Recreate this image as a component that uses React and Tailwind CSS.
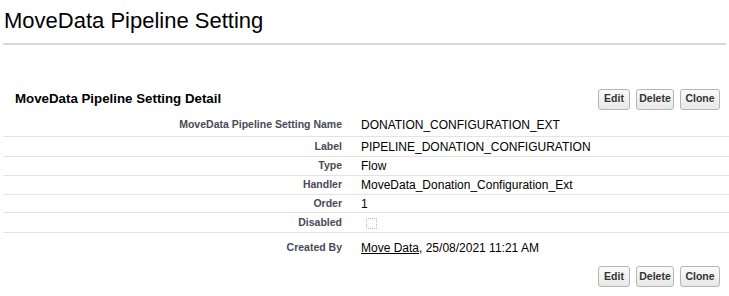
const rows = [
  { label: 'MoveData Pipeline Setting Name', value: 'DONATION_CONFIGURATION_EXT', h: 'h-[27px] pt-[3px]' },
  { label: 'Label', value: 'PIPELINE_DONATION_CONFIGURATION', h: 'h-[20px]' },
  { label: 'Type', value: 'Flow', h: 'h-[19px]' },
  { label: 'Handler', value: 'MoveData_Donation_Configuration_Ext', h: 'h-[19px]' },
  { label: 'Order', value: '1', h: 'h-[18px]' },
  { label: 'Disabled', checkbox: true, h: 'h-[20px]' },
];

const buttons = [
  { name: 'Edit', w: 'w-[32px]' },
  { name: 'Delete', w: 'w-[38px]' },
  { name: 'Clone', w: 'w-[40px]' },
];

const Buttons = () => (
  <div className="flex gap-[6px]">
    {buttons.map((b) => (
      <button
        key={b.name}
        className={`${b.w} h-[21px] rounded-[3px] border border-[#b5b5b5] bg-gradient-to-b from-[#fbfbfb] to-[#e8e8e8] text-[10.5px] font-bold text-[#333]`}
      >
        {b.name}
      </button>
    ))}
  </div>
);

export default function App() {
  return (
    <div className="w-[729px] h-[296px] bg-white text-black font-['Liberation_Sans',Arial,sans-serif]">
      <h1 className="h-[43px] pl-[4px] pt-[7px] text-[22px] leading-[28px]">MoveData Pipeline Setting</h1>
      <div className="mx-[3px] h-[2px] bg-[#d9d9d9]" />

      <div className="mt-[43px] flex items-center justify-between pl-[15px] pr-[9px] h-[22px]">
        <h2 className="text-[13.3px] font-bold">MoveData Pipeline Setting Detail</h2>
        <Buttons />
      </div>

      <div className="ml-[3px]">
        {rows.map((r) => (
          <div key={r.label} className={`flex items-center border-b border-[#e3e3e3] ${r.h}`}>
            <div className="w-[339px] text-right text-[10.5px] font-bold text-[#4a4a56]">{r.label}</div>
            <div className="pl-[19px] text-[12px]">
              {r.checkbox ? (
                <div className="ml-[5px] mt-[2px] w-[11px] h-[11px] border border-dotted border-[#b8b8b8]" />
              ) : (
                r.value
              )}
            </div>
          </div>
        ))}
        <div className="flex items-center h-[28px] pt-[2px]">
          <div className="w-[339px] text-right text-[10.5px] font-bold text-[#4a4a56]">Created By</div>
          <div className="pl-[19px] text-[12px]">
            <a className="underline">Move Data</a>, 25/08/2021 11:21 AM
          </div>
        </div>
      </div>

      <div className="mt-[5px] flex justify-end pr-[9px]">
        <Buttons />
      </div>
    </div>
  );
}
